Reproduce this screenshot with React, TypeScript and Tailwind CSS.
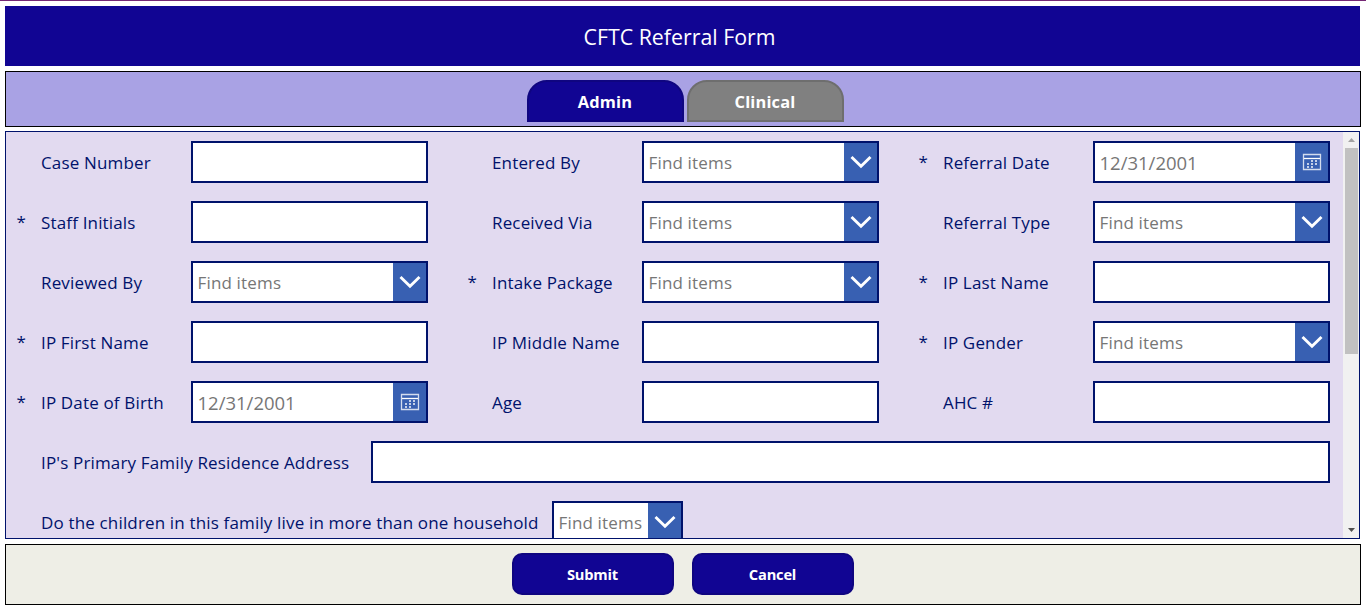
import React from "react";

type Kind = "text" | "select" | "date";
type FieldDef = { label: string; kind: Kind; required?: boolean };

const rows: FieldDef[][] = [
  [
    { label: "Case Number", kind: "text" },
    { label: "Entered By", kind: "select" },
    { label: "Referral Date", kind: "date", required: true },
  ],
  [
    { label: "Staff Initials", kind: "text", required: true },
    { label: "Received Via", kind: "select" },
    { label: "Referral Type", kind: "select" },
  ],
  [
    { label: "Reviewed By", kind: "select" },
    { label: "Intake Package", kind: "select", required: true },
    { label: "IP Last Name", kind: "text", required: true },
  ],
  [
    { label: "IP First Name", kind: "text", required: true },
    { label: "IP Middle Name", kind: "text" },
    { label: "IP Gender", kind: "select", required: true },
  ],
  [
    { label: "IP Date of Birth", kind: "date", required: true },
    { label: "Age", kind: "text" },
    { label: "AHC #", kind: "text" },
  ],
];

function Chevron() {
  return (
    <svg width="33" height="38" viewBox="0 0 33 38" fill="none" className="block">
      <path d="M7.5 14 L17 23.2 L26.5 14" stroke="#fff" strokeWidth="2.9" />
    </svg>
  );
}

function Calendar() {
  const dots = [
    [16, 17], [20, 17],
    [12, 20], [16, 20], [20, 20],
    [12, 23], [16, 23],
  ];
  return (
    <svg width="33" height="38" viewBox="0 0 33 38" fill="none" className="block">
      <path d="M8.5 11.5 H25.5 V26.5 H8.5 Z" stroke="#d3dcee" strokeWidth="1.3" />
      <path d="M9 15.5 H25" stroke="#fff" strokeWidth="1.3" />
      {dots.map(([x, y]) => (
        <rect key={`${x}-${y}`} x={x} y={y} width="2" height="2" fill="#c4d0e8" />
      ))}
    </svg>
  );
}

function Control({ kind, className }: { kind: Kind; className: string }) {
  return (
    <div className={`flex h-[42px] shrink-0 border-2 border-[#00126b] bg-white ${className}`}>
      {kind !== "text" && (
        <>
          <div
            className={`flex grow items-center pt-0.5 whitespace-nowrap text-[#767676] ${
              kind === "date" ? "pl-[4.5px] text-[18.5px] tracking-normal" : "pl-[4.5px]"
            }`}
          >
            {kind === "date" ? "12/31/2001" : "Find items"}
          </div>
          <div className="w-[33px] shrink-0 bg-[#3860b2]">
            {kind === "date" ? <Calendar /> : <Chevron />}
          </div>
        </>
      )}
    </div>
  );
}

function Label({ text, required, className }: { text: string; required?: boolean; className: string }) {
  return (
    <div className={`flex shrink-0 items-center pt-0.5 whitespace-nowrap ${className}`}>
      <span className="w-[25px] shrink-0 pb-0.5 pl-[0.6px]">{required ? "*" : ""}</span>
      <span>{text}</span>
    </div>
  );
}

export default function App() {
  return (
    <div className="flex h-[610px] w-[1366px] flex-col overflow-hidden border-t border-[#742774] bg-white pl-[5px] font-['Open_Sans',sans-serif]">
      <header className="mt-[5px] flex h-[60px] w-[1355px] shrink-0 items-center justify-center bg-[#110593] pt-px pr-[6px] text-[21.33px] text-white">
        CFTC Referral Form
      </header>

      <nav className="mt-[5px] flex h-14 w-[1356px] shrink-0 justify-center gap-[3px] border border-black bg-[#a9a2e4] pt-2 pl-[5px] text-[16.4px] font-bold tracking-[0.15px] text-white">
        <button className="h-[42px] w-[157px] rounded-t-[20px] border-2 border-[#0f0580] bg-[#110593] pt-0.5 pr-px">Admin</button>
        <button className="h-[42px] w-[157px] rounded-t-[20px] border-2 border-[#6e6e6e] bg-[#808080] pt-0.5 pr-px">Clinical</button>
      </nav>

      <main className="mt-1 flex h-[408px] w-[1355px] shrink-0 overflow-hidden border border-[#00126b] bg-[#e2daf0] text-[17px] tracking-[0.16px] text-[#00126b]">
        <div className="flex w-[1337px] shrink-0 flex-col gap-[18px] pt-[9px] pl-[10px]">
          {rows.map((row, i) => (
            <div key={i} className="flex gap-[39px]">
              {row.map((f) => (
                <div key={f.label} className="flex">
                  <Label text={f.label} required={f.required} className="w-[175px]" />
                  <Control kind={f.kind} className="w-[237px]" />
                </div>
              ))}
            </div>
          ))}
          <div className="flex">
            <Label text="IP's Primary Family Residence Address" className="w-[355px]" />
            <Control kind="text" className="w-[959px]" />
          </div>
          <div className="flex">
            <Label text="Do the children in this family live in more than one household" className="w-[536px]" />
            <Control kind="select" className="w-[131px]" />
          </div>
        </div>
        <div className="flex w-4 shrink-0 flex-col items-center bg-[#f1f1f1]">
          <svg width="16" height="16" viewBox="0 0 16 16" className="shrink-0">
            <path d="M5 10 L8.5 6 L12 10 Z" fill="#a3a3a3" />
          </svg>
          <div className="ml-px h-[206px] w-[13px] shrink-0 bg-[#c1c1c1]" />
          <svg width="16" height="16" viewBox="0 0 16 16" className="mt-auto shrink-0">
            <path d="M5 6 L12 6 L8.5 10 Z" fill="#505050" />
          </svg>
        </div>
      </main>

      <footer className="mt-[5px] flex h-[61px] w-[1356px] shrink-0 justify-center gap-[18px] border border-black bg-[#eeeee6] pt-2 text-[14.67px] font-bold tracking-[-0.2px] text-white">
        <button className="h-[42px] w-[162px] rounded-[10px] border-2 border-[#0f0580] bg-[#110593] pr-px">Submit</button>
        <button className="h-[42px] w-[162px] rounded-[10px] border-2 border-[#0f0580] bg-[#110593] pr-px">Cancel</button>
      </footer>
    </div>
  );
}
